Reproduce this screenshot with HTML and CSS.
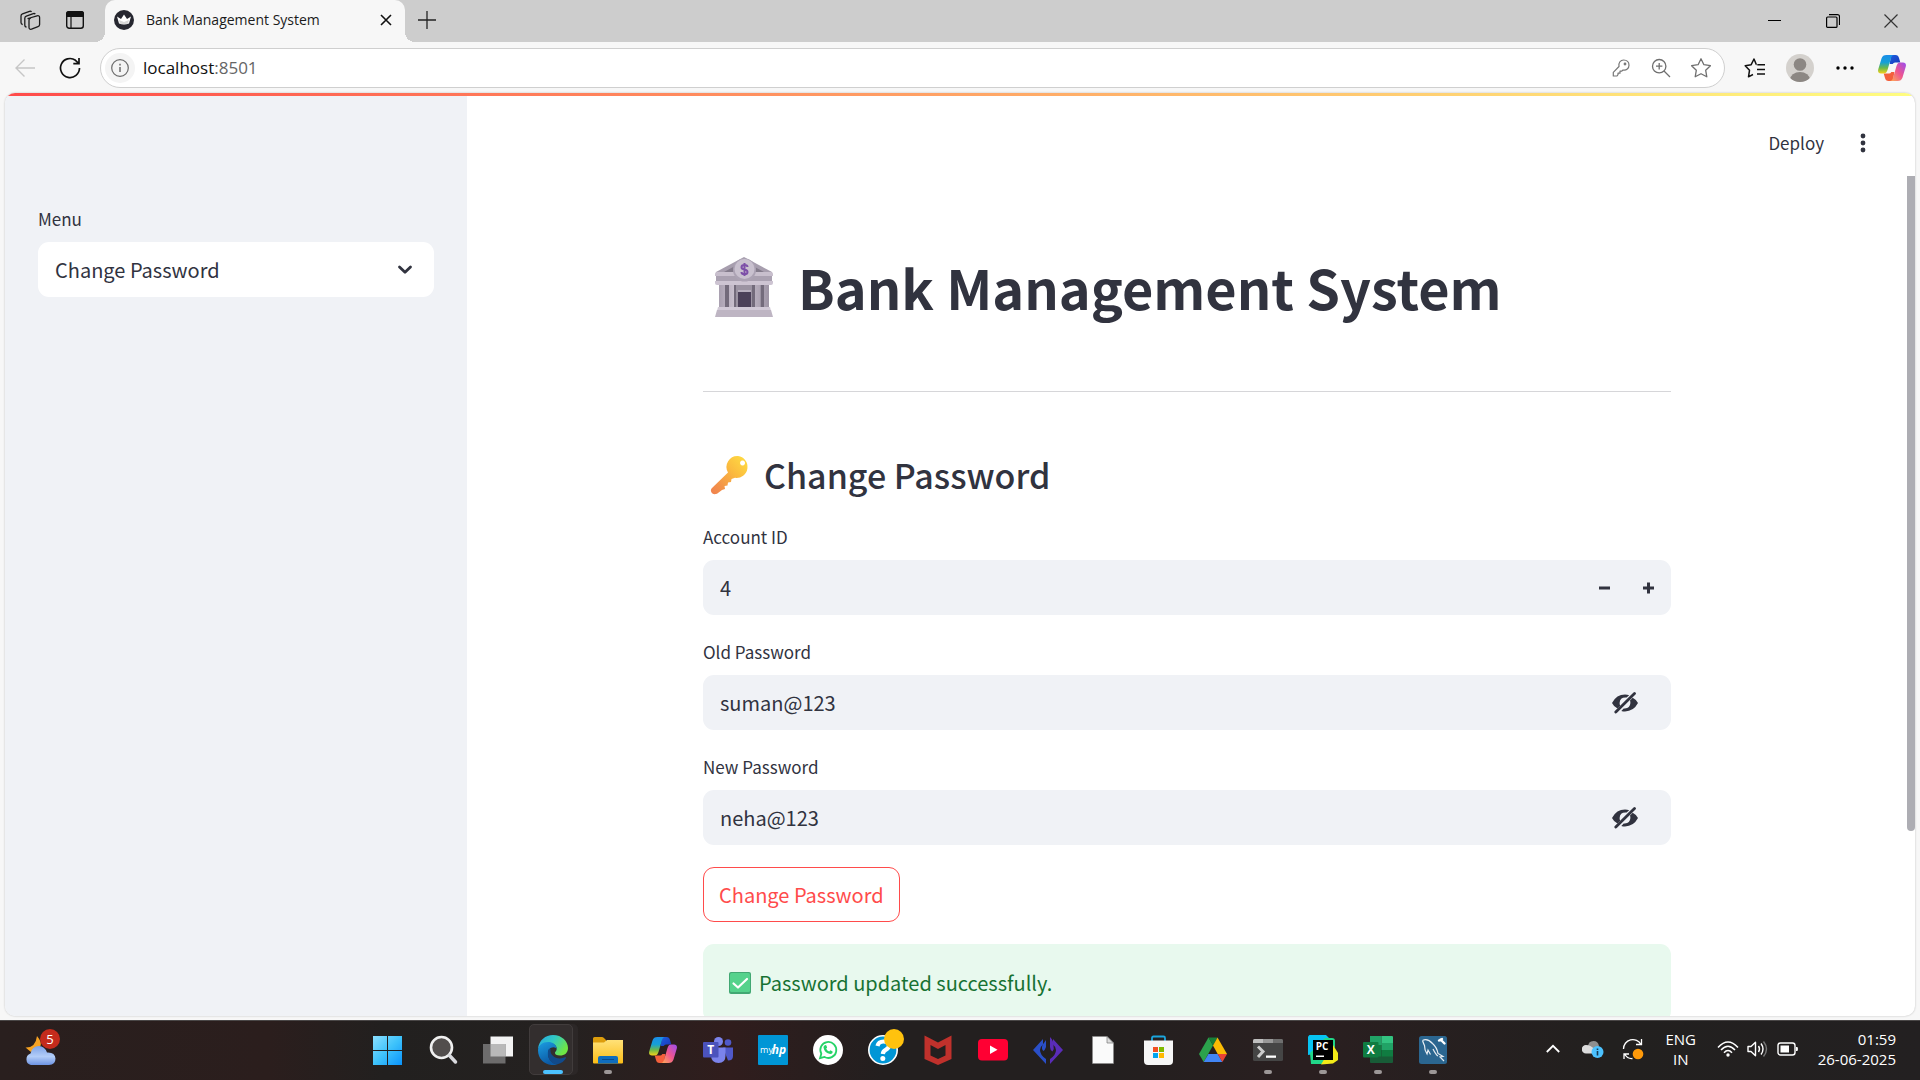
FILE: index.html
```html
<!DOCTYPE html>
<html lang="en">
<head>
<meta charset="utf-8">
<title>Bank Management System</title>
<link rel="stylesheet" href="styles.css">
</head>
<body>
<svg class="defs" aria-hidden="true">
  <defs>
    <linearGradient id="cp-a" x1="0" y1="0" x2="0" y2="1"><stop offset="0" stop-color="#1b8de8"/><stop offset=".4" stop-color="#15a0d8"/><stop offset=".7" stop-color="#6cb94a"/><stop offset="1" stop-color="#f5d21a"/></linearGradient>
    <linearGradient id="cp-b" x1="1" y1="0" x2="0" y2="1"><stop offset="0" stop-color="#9a4df0"/><stop offset=".5" stop-color="#ee5590"/><stop offset="1" stop-color="#ffb152"/></linearGradient>
    <linearGradient id="cp-c" x1="0" y1="0" x2="1" y2="1"><stop offset="0" stop-color="#1d5fe0"/><stop offset="1" stop-color="#1937b8"/></linearGradient>
    <symbol id="copilot" viewBox="0 0 28 26">
      <path fill="url(#cp-c)" d="M13 0h4.500c2 0 3 1 3.500 3l1.300 4.500H17q-1.500 0-2.300 1.500h-3z"/>
      <path fill="#f4603c" d="M15 26h-4.500c-2 0-3-1-3.500-3l-1.300-4.500H11q1.500 0 2.300-1.500h3z"/>
      <path fill="url(#cp-a)" d="M8.500 0H16c-1.500 0-2.300 1-3 3L9.500 15c-.8 2.500-1.800 3.500-4 3.500H3C.8 18.500-.4 17 .2 14.500L3.500 3.500C4.300 1 5.800 0 8.500 0z"/>
      <path fill="url(#cp-b)" d="M19.500 26H12c1.500 0 2.300-1 3-3l3.500-12c.8-2.500 1.800-3.500 4-3.500H25c2.200 0 3.400 1.500 2.800 4l-3.300 11c-.8 2.500-2.300 3.500-5 3.500z"/>
    </symbol>
    <symbol id="eye-off" viewBox="0 0 28 22">
      <path fill="#31333f" d="M1 11Q5.500 2.600 14 2.600q2.200 0 4.200.6l-2.600 2.400Q9 5 8.600 11q0 1.600.6 2.800l-2.700 2.800Q2.600 14.500 1 11z"/>
      <path fill="#31333f" d="M27 11Q22.500 19.400 14 19.400q-2 0-3.700-.5l2.400-2.500Q19 17 19.400 11q0-1.300-.4-2.500l2.700-2.800Q25.400 7.600 27 11z"/>
      <path stroke="#31333f" stroke-width="2.800" stroke-linecap="round" d="M4.800 20 23.500 1.600"/>
    </symbol>
  </defs>
</svg>

<header class="tabstrip">
  <button class="strip-btn" aria-label="Workspaces">
    <svg width="22" height="22" viewBox="0 0 22 22" fill="none" stroke="#1b1b1b" stroke-width="1.300" stroke-linejoin="round">
      <path d="M9 9.500 18 6.800q2.600-.6 2.600 1.700v7q0 1.700-1.600 2.200l-6.500 2.500q-2.300.6-2.500-1.700v-7q0-1.800 1.500-2.300z"/>
      <path d="M7.500 18q-1.700 0-1.700-2V9.300q0-1.600 1.500-2.200l7-2.500q1.300-.4 2 .6M3.700 15.500Q2 15.200 2 13.500V7q0-1.600 1.500-2.200l7-2.500q1.300-.4 2 .6"/>
    </svg>
  </button>
  <button class="strip-btn" aria-label="Tab actions">
    <svg width="20" height="20" viewBox="0 0 20 20"><rect x="1.700" y="1.700" width="16.600" height="16.600" rx="2.500" fill="none" stroke="#111" stroke-width="1.400"/><path fill="#111" d="M1 3.500Q1 1 3.500 1h13Q19 1 19 3.500V7H1z"/><path stroke="#111" stroke-width="1.200" d="M6 6v12"/></svg>
  </button>
  <div class="tab">
    <svg width="20" height="20" viewBox="0 0 20 20"><circle cx="10" cy="10" r="10" fill="#262730"/><path fill="#fff" d="M3 6.500 7 9l3-4.500L13 9l4-2.500-2 7q-5 1.800-10 0z"/><path fill="#bbb" d="m5 10 5 2 5-2-1 3.500q-4 1.300-8 0z" opacity=".6"/></svg>
    <span class="tab-title">Bank Management System</span>
    <button class="tab-close" aria-label="Close tab"><svg width="12" height="12" viewBox="0 0 12 12"><path stroke="#111" stroke-width="1.600" d="m1 1 10 10M11 1 1 11"/></svg></button>
  </div>
  <button class="strip-btn" aria-label="New tab"><svg width="18" height="18" viewBox="0 0 18 18"><path stroke="#222" stroke-width="1.300" d="M9 0v18M0 9h18"/></svg></button>
  <div class="window-controls">
    <button aria-label="Minimize"><svg width="14" height="14" viewBox="0 0 14 14"><path stroke="#000" d="M0 6.500h13"/></svg></button>
    <button aria-label="Restore"><svg width="14" height="14" viewBox="0 0 14 14" fill="none" stroke="#000" stroke-width="1.200"><rect x=".6" y="3" width="10.400" height="10.400" rx="1"/><path d="M3 .6h8.500q2 0 2 2V11"/></svg></button>
    <button aria-label="Close"><svg width="14" height="14" viewBox="0 0 14 14"><path stroke="#333" stroke-width="1.200" d="m.5.5 13 13M13.500.5l-13 13"/></svg></button>
  </div>
</header>

<div class="toolbar">
  <button class="nav-btn" aria-label="Back"><svg width="20" height="18" viewBox="0 0 20 18" fill="none" stroke="#c6c6c6" stroke-width="1.400"><path d="M20 9H1M9.500.5 1 9l8.500 8.500"/></svg></button>
  <button class="nav-btn nav-reload" aria-label="Refresh"><svg width="22" height="22" viewBox="0 0 22 22" fill="none" stroke="#111" stroke-width="1.700"><path d="M20.500 11A9.500 9.500 0 1 1 16.500 3.300L19.800 6.500M20 1v5.700h-5.700"/></svg></button>
  <div class="address">
    <span class="site-info"><svg width="18" height="18" viewBox="0 0 18 18" fill="none" stroke="#6b6b6b" stroke-width="1.200"><circle cx="9" cy="9" r="8.300"/><path stroke-width="1.500" d="M9 8v5M9 4.800v1.700"/></svg></span>
    <span class="url">localhost<span class="port">:8501</span></span>
    <button aria-label="Saved passwords"><svg width="18" height="18" viewBox="0 0 18 18" fill="none" stroke="#767676" stroke-width="1.200" stroke-linejoin="round"><path d="M7 7.500C6.300 3.500 8.500 1 11.700 1S17 3.300 17 6.200s-2.500 5.500-6 4.800l-1.200 1.200H8v2H6v1.500L5 17H1.300v-3.700z"/><circle cx="13" cy="5" r=".8"/></svg></button>
    <button aria-label="Zoom"><svg width="20" height="20" viewBox="0 0 20 20" fill="none" stroke="#6f6f6f" stroke-width="1.300"><circle cx="8.200" cy="8.200" r="6.700"/><path d="m13 13 6 6M5 8.200h6.400M8.200 5v6.400"/></svg></button>
    <button aria-label="Add to favourites"><svg width="22" height="22" viewBox="0 0 22 22" fill="none" stroke="#6f6f6f" stroke-width="1.300" stroke-linejoin="round"><path d="m11 1.800 2.900 5.900 6.500 1-4.700 4.600 1.100 6.500-5.800-3.100-5.800 3.100 1.100-6.500L1.600 8.700l6.500-1z"/></svg></button>
  </div>
  <button class="tool-btn" aria-label="Favourites"><svg width="22" height="22" viewBox="0 0 22 22" fill="none" stroke="#111" stroke-width="1.500" stroke-linejoin="round"><path d="M12.500 7.500h-.2L10 2 7.200 7.700l-6 1 4.300 4.600-1 6.500L9 17.500M13.300 7.700H21M13 12.500h8M13 17h8"/></svg></button>
  <button class="tool-btn" aria-label="Profile"><svg width="28" height="28" viewBox="0 0 28 28"><clipPath id="av"><circle cx="14" cy="14" r="14"/></clipPath><g clip-path="url(#av)"><path fill="#d4d1cd" d="M0 0h28v28H0z"/><circle cx="14" cy="10.500" r="6.300" fill="#8c8783"/><ellipse cx="14" cy="26" rx="10" ry="8" fill="#8c8783"/></g></svg></button>
  <button class="tool-btn" aria-label="Settings and more"><svg width="18" height="4" viewBox="0 0 18 4"><circle cx="2" cy="2" r="1.700"/><circle cx="9" cy="2" r="1.700"/><circle cx="16" cy="2" r="1.700"/></svg></button>
  <button class="tool-btn tool-copilot" aria-label="Copilot"><svg width="28" height="26"><use href="#copilot"/></svg></button>
</div>

<div class="viewport">
  <div class="decoration"></div>
  <div class="app">
    <aside class="sidebar">
      <label class="label" for="menu">Menu</label>
      <div class="select-wrap">
        <select id="menu"><option>Change Password</option></select>
        <svg width="16" height="10" viewBox="0 0 16 10" fill="none" stroke="#31333f" stroke-width="2.800" stroke-linecap="round" stroke-linejoin="round"><path d="m2.500 2 5.500 5.300L13.500 2"/></svg>
      </div>
    </aside>
    <div class="main">
      <div class="app-header">
        <button class="deploy">Deploy</button>
        <button class="kebab" aria-label="Main menu"><svg width="6" height="20" viewBox="0 0 6 20" fill="#31333f"><circle cx="3" cy="3" r="2.400"/><circle cx="3" cy="10" r="2.400"/><circle cx="3" cy="17" r="2.400"/></svg></button>
      </div>
      <div class="scroll-row">
        <main class="content">
          <div class="block">
            <h1>
              <svg width="60" height="60" viewBox="0 0 60 60" aria-hidden="true">
                <defs><linearGradient id="bk" x1="0" y1="0" x2="1" y2="0"><stop offset="0" stop-color="#a9a0b0"/><stop offset=".4" stop-color="#d2c9d6"/><stop offset="1" stop-color="#9e95a5"/></linearGradient></defs>
                <path fill="#9b93a2" d="M5 27h50v24H5z"/>
                <path fill="#b8afbe" d="M24 33h13v18H24z"/><path fill="#4c4159" d="M24 35h13v15H24z"/>
                <path fill="#736b7b" d="M11 28h4v22h-4zM20 28h2v22h-2zM38 28h3v22h-3zM47 28h3v22h-3z"/>
                <path fill="url(#bk)" d="M5 28h6v22H5zM15 28h5v22h-5zM41 28h5v22h-5zM50 28h5v22h-5z"/>
                <path fill="#a79eae" d="M2 15 30 0l28 15v3H2z"/><path fill="#837b8b" d="m10 15 11-6v6zM50 15 39 9v6z"/>
                <path fill="#c8bfcd" d="M1 17q0-2 2-2h54q2 0 2 2v2H1z"/><path fill="#aaa1b1" d="M2 19h56v5H2z"/><path fill="#cdc4d2" d="M1 24h58v2q0 2-2 2H3q-2 0-2-2z"/>
                <path fill="#d1c9d6" d="M4 50h52l1 4H3z"/><path fill="#beb5c3" d="M3 53h54l2 7H1z"/>
                <circle cx="30.500" cy="13" r="11.500" fill="#aca3b4"/><circle cx="30.500" cy="12" r="10" fill="#c9c1cf"/>
                <path fill="none" stroke="#7d4fa8" stroke-width="2" d="M30.500 6v13M33.500 10q0-2-3-2t-3 2.200q0 1.800 3 2.300t3 2.500q0 2.200-3 2.200t-3-2.200"/>
              </svg>
              <span>Bank Management System</span>
            </h1>
            <hr>
            <h2>
              <svg width="40" height="40" viewBox="0 0 40 40" aria-hidden="true">
                <defs><linearGradient id="ky" x1="1" y1="0" x2="0" y2="1"><stop offset="0" stop-color="#ffe043"/><stop offset=".4" stop-color="#fbbb3f"/><stop offset=".75" stop-color="#f39449"/><stop offset="1" stop-color="#f0804f"/></linearGradient></defs>
                <path fill="url(#ky)" fill-rule="evenodd" d="M28 1a11 11 0 1 1-3 21.800L21.500 24l-.5 3-3 .5-.5 3-3 .5.500 3-3 1-5 3.700Q3 40 1.500 37.500T2 33L18 17.500A11 11 0 0 1 28 1zm4.500 4.500a2.500 2.500 0 1 0 .1 0z"/>
              </svg>
              <span>Change Password</span>
            </h2>
            <form class="form" onsubmit="return false">
              <div class="field">
                <label class="label" for="account">Account ID</label>
                <div class="input-box">
                  <input id="account" type="text" inputmode="numeric" value="4">
                  <button type="button" aria-label="Decrease"><svg width="12" height="12" viewBox="0 0 12 12"><path stroke="#31333f" stroke-width="3" d="M0 6h11"/></svg></button>
                  <button type="button" aria-label="Increase"><svg width="12" height="12" viewBox="0 0 12 12"><path stroke="#31333f" stroke-width="3" d="M0 6h11M5.500.500v11"/></svg></button>
                </div>
              </div>
              <div class="field">
                <label class="label" for="old">Old Password</label>
                <div class="input-box">
                  <input id="old" type="text" value="suman@123">
                  <button type="button" class="reveal" aria-label="Hide old password"><svg width="28" height="22"><use href="#eye-off"/></svg></button>
                </div>
              </div>
              <div class="field">
                <label class="label" for="new">New Password</label>
                <div class="input-box">
                  <input id="new" type="text" value="neha@123">
                  <button type="button" class="reveal" aria-label="Hide new password"><svg width="28" height="22"><use href="#eye-off"/></svg></button>
                </div>
              </div>
              <button class="submit">Change Password</button>
            </form>
            <div class="alert" role="status">
              <svg width="22" height="22" viewBox="0 0 22 22" aria-hidden="true"><rect width="22" height="22" rx="2" fill="#42a873"/><rect x="1" y="1" width="20" height="19" rx="1.500" fill="#55d28c"/><path fill="none" stroke="#fff" stroke-width="2.200" stroke-linecap="round" stroke-linejoin="round" d="m4.500 11.500 4.500 4L18 7"/></svg>
              <span>Password updated successfully.</span>
            </div>
          </div>
        </main>
        <div class="scrollbar"><div class="thumb"></div></div>
      </div>
    </div>
  </div>
</div>

<footer class="taskbar">
  <div class="widgets">
    <button class="weather" aria-label="Weather">
      <svg width="32" height="32" viewBox="0 0 32 32"><defs><linearGradient id="cl" x1="0" y1="0" x2="0" y2="1"><stop offset="0" stop-color="#7ea2e6"/><stop offset=".55" stop-color="#b3cdf8"/><stop offset="1" stop-color="#6d93e2"/></linearGradient></defs><path fill="#f6a223" d="M12 2q5 6 3.500 10L6 18 .5 13.500q10 .5 11.500-11.500z"/><path fill="url(#cl)" d="M6 31a6 6 0 0 1-.5-11.500Q7 12 14 12q5.500 0 8 6.500 8-.5 8.500 6 0 6.500-6.500 6.500z"/></svg>
      <span class="badge">5</span>
    </button>
  </div>
  <nav class="pinned">
    <button aria-label="Start"><svg width="30" height="30" viewBox="0 0 30 30"><defs><linearGradient id="wn" x1="0" y1="0" x2="1" y2="1"><stop offset="0" stop-color="#8be0ff"/><stop offset=".5" stop-color="#3fc3fb"/><stop offset="1" stop-color="#0a93fb"/></linearGradient></defs><path fill="url(#wn)" d="M0 1h14v14H0zM15 1h14v14H15zM0 16h14v14H0zM15 16h14v14H15z"/></svg></button>
    <button aria-label="Search"><svg width="30" height="30" viewBox="0 0 30 30"><circle cx="13.500" cy="12.500" r="10.500" fill="#524e4d" stroke="#f0f0f0" stroke-width="2.600"/><path stroke="#d9dade" stroke-width="3.500" stroke-linecap="round" d="m21.500 20.500 6 6.500"/></svg></button>
    <button aria-label="Task view"><svg width="30" height="30" viewBox="0 0 30 30"><path fill="#f3f3f3" d="M7.500 1.500H30v20H7.500z"/><path fill="#6d6c6c" d="M0 9h22.500v19.500H0z"/><path fill="#b9b9b9" d="M7.500 9h15v12.500h-15z"/></svg></button>
    <button class="active" aria-label="Edge">
      <svg width="30" height="30" viewBox="0 0 30 30"><defs><linearGradient id="eg" x1="0" y1="0" x2="1" y2=".5"><stop offset="0" stop-color="#25a5e5"/><stop offset=".5" stop-color="#31c9c4"/><stop offset="1" stop-color="#6fe645"/></linearGradient><linearGradient id="eb" x1="0" y1="0" x2=".4" y2="1"><stop offset="0" stop-color="#1b9de2"/><stop offset="1" stop-color="#0c59a4"/></linearGradient></defs>
      <path fill="url(#eg)" d="M0 14C1 5 7.500 0 15 0c9 0 15 6.500 15 13 0 5-3.500 7.500-8 7.500-3.500 0-5-1-5-2.500s1.700-1.600 1.700-4.500-3-5.500-7.700-5.500c-6 0-9.500 3-11 6z"/><path fill="url(#eb)" d="M0 15c.5-4.500 4.500-8 10-8 5 0 9 3 8.500 7-.5-1-1.500-1.800-3-1.800-3.500 0-5.500 3-5.500 6.300 0 5.500 4 10 9.500 11C9.500 32 0 26 0 15z"/><path fill="#114a8b" d="M10.500 14.500C8 22 13 29.500 19.500 29.300c4-1 7-3.300 8.500-6.300.3-.7-.3-1-1-.7-7 3.200-15.500-.8-14.500-8-.8-.7-1.500-.6-2 .2z"/></svg>
      <i class="mark mark-on"></i></button>
    <button aria-label="File Explorer"><svg width="30" height="30" viewBox="0 0 30 30"><defs><linearGradient id="fe" x1="0" y1="0" x2="0" y2="1"><stop offset="0" stop-color="#ffe178"/><stop offset="1" stop-color="#fbbd17"/></linearGradient></defs><path fill="#dd9d0c" d="M0 3.500Q0 2 1.500 2H9q1 0 1.700.8L13 5v6H0z"/><path fill="url(#fe)" d="M0 7.500h11L14 5h16v22.500q0 1-1 1H1q-1 0-1-1z"/><path fill="#0f6dbd" d="M5 28.500V23q0-2 2-2h16q2 0 2 2v5.500z"/><path stroke="#0a4b8d" d="M9 24.500h12"/></svg><i class="mark"></i></button>
    <button aria-label="Copilot"><svg width="28" height="26"><use href="#copilot"/></svg></button>
    <button aria-label="Teams"><svg width="30" height="30" viewBox="0 0 30 30"><circle cx="25" cy="7.500" r="3.300" fill="#5059c9"/><path fill="#5059c9" d="M20 12.500h10V21q0 4.500-5 4.500z"/><circle cx="15.500" cy="6.500" r="4.500" fill="#7b83eb"/><path fill="#7b83eb" d="M8 12.500h14.500V21q0 7-7 7T8 21z"/><rect y="7" width="15.500" height="15.500" rx="1" fill="#4b53bc"/><text x="7.800" y="19" class="glyph" font-size="12" fill="#fff">T</text></svg></button>
    <button aria-label="myHP"><svg width="30" height="30" viewBox="0 0 30 30"><rect width="30" height="30" rx="1" fill="#0096d6"/><text x="8.500" y="18" class="glyph glyph-light" font-size="9" fill="#fff">my</text><text x="21" y="19" class="glyph glyph-italic" font-size="12" fill="#fff">hp</text></svg></button>
    <button aria-label="WhatsApp"><svg width="30" height="30" viewBox="0 0 30 30"><circle cx="15" cy="15" r="15" fill="#fff"/><path fill="none" stroke="#25d366" stroke-width="1.800" d="m7 23.200 1.300-4.400A8 8 0 1 1 11.500 22z"/><path fill="#25d366" d="M11.500 10.500q1.500-1 2 .3l.6 1.700-.9 1.200q1 2 3 2.800l1.200-1.200 2.200 1.200q.3 2.300-2.300 2.500-5.800-.6-6.800-6.500 0-1.400 1-2z"/></svg></button>
    <button aria-label="HP Support"><svg class="wide" width="36" height="36" viewBox="0 0 36 36"><circle cx="15" cy="21" r="14.200" fill="#0096d6" stroke="#fff" stroke-width="1.600"/><path fill="none" stroke="#fff" stroke-width="4.200" d="M9.500 17q1-4.500 6-4.500t5.500 4q0 2.500-3 4.200-3 1.500-3.200 4.300"/><circle cx="14.800" cy="29.500" r="2.500" fill="#fff"/><circle cx="26" cy="10" r="10" fill="#ffc20e"/></svg></button>
    <button aria-label="McAfee"><svg width="28" height="30" viewBox="0 0 28 30"><path fill="#c0312c" d="m.5.500 13.500 7 13.500-7v23.500L14 30 .5 24zm6 9.500v10.500L14 24l7.500-3.500V10L14 14z"/></svg></button>
    <button aria-label="YouTube"><svg width="30" height="22" viewBox="0 0 30 22"><rect width="30" height="21.500" rx="4" fill="#f03"/><path fill="#fff" d="m12 6.500 7.500 4.300L12 15z"/></svg></button>
    <button aria-label="Code assistant"><svg width="30" height="30" viewBox="0 0 30 30"><path fill="#2a4fc8" d="M10 4 0 15l13 14v-5q-6-4-6-9 0-3 3-5.500z"/><path fill="#2a4fc8" d="M9.500 10 13 5v7q-1 3-2.500 4Q8 14 9.500 10z"/><path fill="#5a2cb8" d="M20 4l10 11-13 14v-5q6-4 6-9 0-3-3-5.500z"/><path fill="#5a2cb8" d="M17 2q4 4 3.500 9 1 3-1 5.500Q17 15 17 12z"/></svg></button>
    <button aria-label="Document"><svg width="22" height="28" viewBox="0 0 22 28"><path fill="#fafafa" stroke="#8b8b8b" stroke-width=".6" d="M.5.500h14.500l6.500 6.500v20.500H.5z"/><path fill="#ddd" stroke="#777" stroke-width=".7" d="M15 .5V7h6.500z"/></svg></button>
    <button aria-label="Microsoft Store"><svg width="30" height="30" viewBox="0 0 30 30"><path fill="none" stroke="#1ba5dd" stroke-width="1.800" d="M9 7V3q0-1.500 1.500-1.500h10Q22 1.500 22 3v4"/><path fill="#f6f6f6" d="M1 5.500h29V26q0 4-4 4H5q-4 0-4-4z"/><path fill="#f25022" d="M10 12h5v5h-5z"/><path fill="#7fba00" d="M16 12h5v5h-5z"/><path fill="#00a4ef" d="M10 18h5v5h-5z"/><path fill="#ffb900" d="M16 18h5v5h-5z"/></svg></button>
    <button aria-label="Google Drive"><svg width="28" height="26" viewBox="0 0 28 26"><path fill="#2ba24c" d="M9.500.500 0 17l4.700 8L14 8.500z"/><path fill="#188038" d="M9.500.500h9L14 8.500z"/><path fill="#fbbc04" d="M18.500.500 28 17h-9.300L14 8.500z"/><path fill="#4285f4" d="M4.700 25 9.400 17h9.300l4.700 8z"/><path fill="#ea4335" d="M18.700 17H28l-4.600 8z"/></svg></button>
    <button aria-label="Terminal"><svg width="30" height="24" viewBox="0 0 30 24"><rect y="1" width="30" height="22" rx="1.500" fill="#454545"/><path fill="#bfbfbf" d="M0 2.500Q0 1 1.500 1H10v4H0z"/><path fill="#989898" d="M10 1h10v4H10z"/><path fill="#6f6f6f" d="M20 1h8.500q1.500 0 1.500 1.500V5H20z"/><path fill="none" stroke="#ccc" stroke-width="3" d="m5 8.500 5 5-5 5.500"/><path fill="#fff" d="M13 17.500h10v2.300H13z"/></svg><i class="mark"></i></button>
    <button aria-label="PyCharm"><svg width="30" height="30" viewBox="0 0 30 30"><path fill="#07c3f2" d="M0 1.500 1.500 0H18l6 6v10L0 20z"/><path fill="#21d789" d="M17 3h7q3 0 3 3v6L16 29H3L2 18z"/><path fill="#f3ea18" d="m25 10 5 8v7l-5 3.500-12 1z"/><path d="M5 5h20v20H5z"/><text x="14" y="14.500" class="glyph" font-size="10" fill="#fff">PC</text><path fill="#fff" d="M8 20.500h8V22H8z"/></svg><i class="mark"></i></button>
    <button aria-label="Excel"><svg width="30" height="30" viewBox="0 0 30 30"><path fill="#21a366" d="M7 1h11.500v9H7z"/><path fill="#33c481" d="M18.500 1H29q1 0 1 1v8H18.500z"/><path fill="#107c41" d="M7 10h11.500v12H7z"/><path fill="#21a366" d="M18.500 8H30v7H18.500z"/><path fill="#107c41" d="M18.500 15H30v7H18.500z"/><path fill="#185c37" d="M7 21.500h23V27q0 1-1 1H8q-1 0-1-1z"/><rect y="7" width="15.500" height="15.500" rx="1" fill="#107c41"/><text x="7.700" y="19" class="glyph" font-size="12" fill="#fff">X</text></svg><i class="mark"></i></button>
    <button aria-label="MySQL Workbench"><svg width="30" height="30" viewBox="0 0 30 30"><rect x="1" y="1" width="28" height="28" rx="2.500" fill="#2b6690"/><path fill="none" stroke="#e8eef3" stroke-width="1.200" d="M4.500 5.500q5-2.500 10 3 4.500 4 5.500 10l5 3-3 .5 4 4M4.500 5.500q1 3 2 5 0 5 2.500 8.500l1-4 2.500 4.500M15 14q3 6 5 7"/><path stroke="#fff" stroke-width="2.400" stroke-linecap="round" d="m22.500 4.500 4 4M21 5.500l3-1.500"/></svg><i class="mark"></i></button>
  </nav>
  <div class="tray">
    <button class="tray-btn" aria-label="Show hidden icons"><svg width="14" height="10" viewBox="0 0 14 10" fill="none" stroke="#fff" stroke-width="1.800"><path d="m.8 8 6.200-6.200L13.200 8"/></svg></button>
    <button class="tray-btn" aria-label="OneDrive"><svg width="22" height="20" viewBox="0 0 22 20"><path fill="#8f8f8f" d="M6 8q0-6 5.500-6Q16 2 17 7l-4 6H6z"/><path fill="#dcdcdc" d="M4 14.500a4 4 0 0 1 0-8.500q5 0 9 5l-2 3.500z"/><circle cx="15.500" cy="13" r="6" fill="#4cc2ff"/><path stroke="#143b55" stroke-width="1.600" d="M15.500 12v4.500M15.500 9.500v1.500"/></svg></button>
    <button class="tray-btn" aria-label="Windows Update"><svg width="22" height="22" viewBox="0 0 22 22" fill="none" stroke="#fff" stroke-width="1.300"><path d="M1.500 11A9.300 9.300 0 0 1 19 6.500M19.500 1v5.500H14M2 21v-5h5M2.500 16q3 5 8 4.500"/><circle cx="16" cy="16" r="5.300" fill="#ff9a0a" stroke="none"/></svg></button>
    <button class="lang">ENG<br>IN</button>
    <button class="quick" aria-label="Network, sound and battery">
      <svg width="22" height="18" viewBox="0 0 22 18" fill="none" stroke="#fff" stroke-width="1.500"><path d="M1 7.500q10-11 20 0M4 10q7-7.600 14 0M7 12.700q4-4.400 8 0"/><circle cx="11" cy="15" r="1.700" fill="#fff" stroke="none"/></svg>
      <svg width="22" height="18" viewBox="0 0 22 18" fill="none" stroke="#fff" stroke-width="1.400"><path stroke-linejoin="round" d="M1 6.500h3l4.500-4.300v13.600L4 11.500H1z"/><path d="M11.500 6q2 3 0 6M14 3.500q4 5.500 0 11"/><path stroke="#777" d="M16.500 1.500q6 7.500 0 15"/></svg>
      <svg width="22" height="16" viewBox="0 0 22 16"><rect x="1" y="2" width="17" height="12" rx="2.500" fill="none" stroke="#fff" stroke-width="1.400"/><path fill="#fff" d="M3.500 4.500H12v7H3.500zM19 6h1.500q1 2 0 4H19z"/></svg>
    </button>
    <button class="clock">01:59<br>26-06-2025</button>
  </div>
</footer>
</body>
</html>
```
FILE: styles.css
```css
* { box-sizing: border-box; }

html, body { height: 100%; }

body {
  margin: 0;
  display: flex;
  flex-direction: column;
  overflow: hidden;
  background: #f7f7f7;
  color: #31333f;
  font-family: "Noto Sans CJK SC", "Noto Sans", sans-serif;
}

svg { display: block; flex: none; }
.defs { position: absolute; width: 0; height: 0; }

button {
  display: flex;
  align-items: center;
  justify-content: center;
  padding: 0;
  border: 0;
  background: none;
  color: inherit;
  font: inherit;
}

/* Browser chrome */
.tabstrip, .toolbar, .taskbar { font-family: "Open Sans", "Noto Sans", sans-serif; }

.tabstrip {
  display: flex;
  align-items: stretch;
  height: 42px;
  padding-left: 12px;
  background: #cdcdcd;
  flex: none;
}
.strip-btn { width: 36px; padding-bottom: 2px; }
.strip-btn + .strip-btn { margin-left: 9px; }

.tab {
  position: relative;
  display: flex;
  align-items: center;
  gap: 12px;
  width: 300px;
  margin-left: 12px;
  padding: 0 9px 2px;
  border-radius: 10px 10px 0 0;
  background: #f7f7f7;
}
.tab::before, .tab::after {
  content: "";
  position: absolute;
  bottom: 0;
  width: 10px;
  height: 10px;
}
.tab::before { left: -10px; background: radial-gradient(circle at 0 0, #cdcdcd 10px, #f7f7f7 10px); }
.tab::after { right: -10px; background: radial-gradient(circle at 100% 0, #cdcdcd 10px, #f7f7f7 10px); }
.tab-title { flex: 1; color: #1b1b1b; font-size: 14px; line-height: 20px; white-space: nowrap; }
.tab-close { width: 20px; height: 20px; }
.tab + .strip-btn { margin-left: 4px; }

.window-controls { display: flex; margin-left: auto; }
.window-controls button { width: 58px; }

.toolbar {
  display: flex;
  align-items: center;
  height: 51px;
  padding: 0 3px 0 5px;
  flex: none;
}
.nav-btn { width: 40px; height: 40px; }
.nav-reload { margin: 0 10px 0 5px; }
.address {
  display: flex;
  align-items: center;
  flex: 1;
  height: 40px;
  padding: 0 3px 0 4px;
  border: 1px solid #cfcfcf;
  border-radius: 20px;
  background: #fff;
}
.address button { width: 40px; height: 36px; }
.site-info {
  display: grid;
  place-items: center;
  width: 30px;
  height: 30px;
  margin-right: 8px;
  border-radius: 50%;
  background: #f4f4f4;
}
.url { flex: 1; color: #111; font-size: 17px; line-height: 24px; }
.port { color: #666; }
.tool-btn { width: 45px; height: 40px; }
.address + .tool-btn { margin-left: 7px; }
.tool-copilot { width: 50px; }

/* Page viewport */
.viewport {
  display: flex;
  flex-direction: column;
  flex: 1;
  min-height: 0;
  margin: 0 5px 4px;
  border-radius: 10px;
  background: #fff;
  box-shadow: 0 0 2px #b5b5b5;
  overflow: hidden;
}
.decoration { height: 3px; background: linear-gradient(90deg, #ff4b4b, #fffd80); flex: none; }
.app { display: flex; flex: 1; min-height: 0; }

.sidebar {
  width: 462px;
  padding: 108px 33px 0;
  background: #f0f2f6;
  flex: none;
}
.label {
  display: block;
  margin-bottom: 8px;
  font-size: 17px;
  line-height: 30px;
}
.select-wrap { display: grid; align-items: center; }
.select-wrap > * { grid-area: 1 / 1; }
.select-wrap svg { justify-self: end; margin-right: 21px; pointer-events: none; }
select {
  width: 100%;
  height: 55px;
  padding: 0 17px;
  border: 0;
  border-radius: 11px;
  background: #fff;
  color: inherit;
  font: inherit;
  font-size: 20px;
  appearance: none;
}

.main { display: flex; flex-direction: column; flex: 1; min-width: 0; }
.app-header {
  display: flex;
  align-items: center;
  justify-content: flex-end;
  gap: 28px;
  height: 80px;
  padding: 13px 41px 0 0;
  flex: none;
}
.deploy { font-size: 17px; line-height: 28px; }
.kebab { width: 22px; height: 28px; }

.scroll-row { display: flex; flex: 1; min-height: 0; }
.content { flex: 1; min-width: 0; overflow: hidden; }
.scrollbar { width: 8px; flex: none; }
.thumb { height: 78%; border-radius: 0 0 4px 4px; background: #adadb3; }

.block { max-width: 968px; margin: 0 auto; padding-top: 75px; }

h1, h2 { display: flex; align-items: center; margin: 0; }
h1 { gap: 24px; padding-left: 11px; font-size: 54px; font-weight: 700; line-height: 72px; }
h2 { gap: 14px; padding-left: 7px; font-size: 34px; font-weight: 500; line-height: 48px; }
hr { height: 1px; margin: 68px 0 59px; border: 0; background: #d6d6d9; }

.form { display: flex; flex-direction: column; align-items: flex-start; gap: 22px; margin: 23px 0 22px; }
.field { width: 100%; }
.input-box {
  display: flex;
  height: 55px;
  border-radius: 11px;
  background: #f0f2f6;
}
.input-box input {
  flex: 1;
  min-width: 0;
  padding: 0 17px;
  border: 0;
  background: none;
  color: inherit;
  font: inherit;
  font-size: 20px;
}
.input-box button { width: 44px; }
.input-box .reveal { width: 92px; }
.submit {
  height: 55px;
  padding: 0 15px;
  border: 1px solid #ff4b4b;
  border-radius: 11px;
  color: #ff4b4b;
  font-size: 20px;
}
.alert {
  display: flex;
  align-items: center;
  gap: 8px;
  padding: 22px 26px;
  border-radius: 11px;
  background: #e8f9ee;
  color: #177233;
  font-size: 20px;
  line-height: 34px;
}

/* Taskbar */
.taskbar {
  display: grid;
  grid-template-columns: 18fr 1100px 23fr;
  height: 60px;
  background: linear-gradient(90deg, #291f1e, #2b1e1d 14%, #22201f 20%, #242120 29%, #301d1d 38%, #231f1f 46%, #231f1f 58%, #2a1f20 68%, #22201f 84%, #232021);
  box-shadow: inset 0 1px #4a4747;
  color: #fff;
  font-size: 15px;
  line-height: 20px;
  flex: none;
}
.widgets { display: flex; align-items: center; padding-left: 25px; }
.weather { position: relative; }
.badge {
  position: absolute;
  top: -5px;
  left: 15px;
  width: 20px;
  height: 20px;
  border-radius: 50%;
  background: #c42b1c;
  font-size: 13px;
  text-align: center;
}
.pinned { display: grid; grid-template-columns: repeat(20, 55px); }
.pinned button { position: relative; }
.pinned .wide { margin: -6px -6px 0 0; }
.active::before {
  content: "";
  position: absolute;
  inset: 4px 7px 5px 4px;
  border: 1px solid #413c3c;
  border-radius: 5px;
  background: #332e2e;
  box-shadow: 5px 0 0 #2c2727;
}
.active svg { position: relative; }
.mark {
  position: absolute;
  bottom: 6px;
  left: 50%;
  width: 8px;
  height: 4px;
  margin-left: -4px;
  border-radius: 2px;
  background: #9c9797;
}
.mark-on { width: 20px; margin-left: -10px; background: #4cc2ff; }
.glyph { font-family: "Open Sans", sans-serif; font-weight: 700; text-anchor: middle; }
.glyph-light { font-weight: 400; }
.glyph-italic { font-style: italic; }

.tray { display: flex; align-items: center; justify-content: flex-end; padding: 0 24px 2px 0; }
.tray-btn { width: 40px; height: 44px; }
.lang { width: 56px; text-align: center; }
.quick { gap: 8px; margin: 0 19px 0 8px; }
.clock { text-align: right; }
```
